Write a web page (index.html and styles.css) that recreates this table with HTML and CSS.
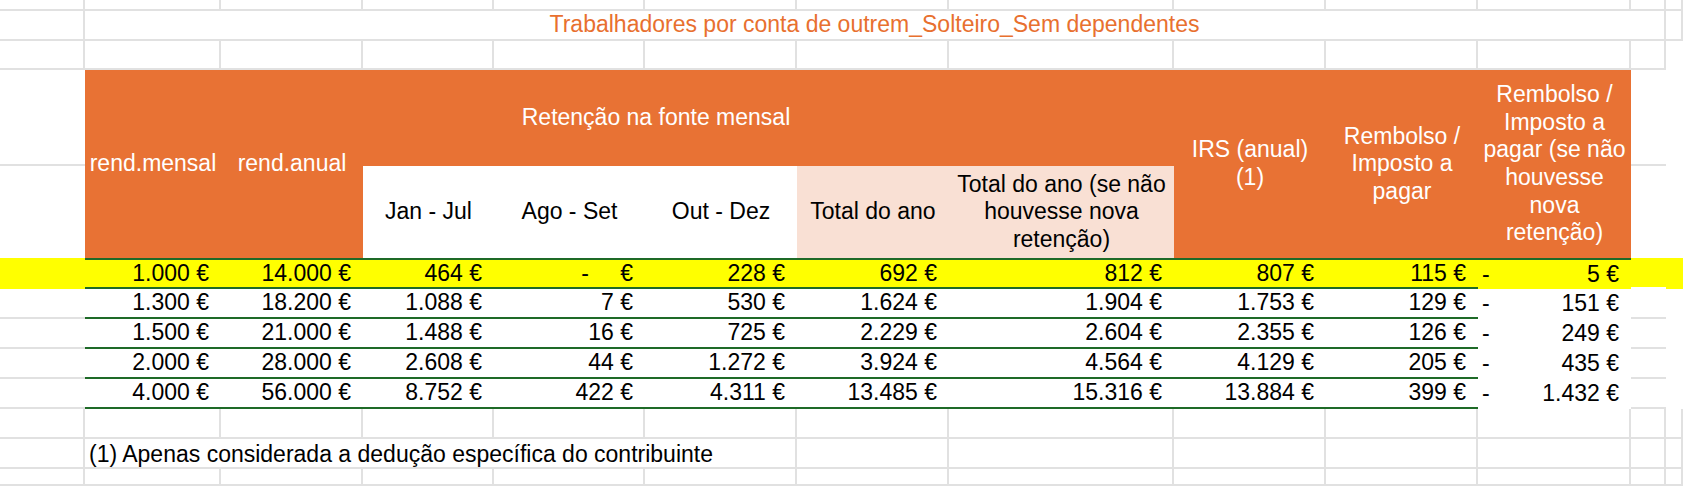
FILE: index.html
```html
<!DOCTYPE html>
<html lang="pt">
<head>
<meta charset="utf-8">
<title>Trabalhadores por conta de outrem</title>
<link rel="stylesheet" href="styles.css">
</head>
<body>
<div class="sheet">
  <!-- row 0 -->
  <div class="g"></div><div class="g"></div><div class="g"></div><div class="g"></div><div class="g"></div><div class="g"></div><div class="g"></div><div class="g"></div><div class="g"></div><div class="g"></div><div class="g"></div><div class="g"></div><div class="g"></div>
  <!-- row 1 -->
  <div class="g"></div>
  <div class="g title">Trabalhadores por conta de outrem_Solteiro_Sem dependentes</div>
  <div class="g"></div>
  <!-- row 2 -->
  <div class="g"></div><div class="g"></div><div class="g"></div><div class="g"></div><div class="g"></div><div class="g"></div><div class="g"></div><div class="g"></div><div class="g"></div><div class="g"></div><div class="g"></div><div class="g"></div><div></div>
  <!-- row 3 -->
  <div class="gb"></div>
  <div class="hd rs2">rend.mensal</div>
  <div class="hd rs2">rend.anual</div>
  <div class="hd cs4">Retenção na fonte mensal</div>
  <div class="hd"></div>
  <div class="hd rs2">IRS (anual) (1)</div>
  <div class="hd rs2">Rembolso / Imposto a pagar</div>
  <div class="hd rs2">Rembolso / Imposto a pagar (se não houvesse nova retenção)</div>
  <div class="gb"></div>
  <div></div>
  <!-- row 4 -->
  <div></div>
  <div class="sub">Jan - Jul</div>
  <div class="sub">Ago - Set</div>
  <div class="sub">Out - Dez</div>
  <div class="sub pk">Total do ano</div>
  <div class="sub pk">Total do ano (se não houvesse nova retenção)</div>
  <div></div>
  <div></div>
  <!-- row 5 (highlighted) -->
  <div class="y"></div>
  <div class="num y top">1.000&nbsp;€</div>
  <div class="num y top">14.000&nbsp;€</div>
  <div class="num y top">464&nbsp;€</div>
  <div class="num y top"><span class="dz">-</span>&nbsp;€</div>
  <div class="num y top">228&nbsp;€</div>
  <div class="num y top">692&nbsp;€</div>
  <div class="num y top">812&nbsp;€</div>
  <div class="num y top">807&nbsp;€</div>
  <div class="num y top">115&nbsp;€</div>
  <div class="neg y top"><span>-</span><span>5&nbsp;€</span></div>
  <div class="y wb"></div>
  <div class="y"></div>
  <!-- row 6 -->
  <div class="gb"></div>
  <div class="num">1.300&nbsp;€</div>
  <div class="num">18.200&nbsp;€</div>
  <div class="num">1.088&nbsp;€</div>
  <div class="num">7&nbsp;€</div>
  <div class="num">530&nbsp;€</div>
  <div class="num">1.624&nbsp;€</div>
  <div class="num">1.904&nbsp;€</div>
  <div class="num">1.753&nbsp;€</div>
  <div class="num">129&nbsp;€</div>
  <div class="neg"><span>-</span><span>151&nbsp;€</span></div>
  <div class="gb"></div>
  <div></div>
  <!-- row 7 -->
  <div class="gb"></div>
  <div class="num">1.500&nbsp;€</div>
  <div class="num">21.000&nbsp;€</div>
  <div class="num">1.488&nbsp;€</div>
  <div class="num">16&nbsp;€</div>
  <div class="num">725&nbsp;€</div>
  <div class="num">2.229&nbsp;€</div>
  <div class="num">2.604&nbsp;€</div>
  <div class="num">2.355&nbsp;€</div>
  <div class="num">126&nbsp;€</div>
  <div class="neg"><span>-</span><span>249&nbsp;€</span></div>
  <div class="gb"></div>
  <div></div>
  <!-- row 8 -->
  <div class="gb"></div>
  <div class="num">2.000&nbsp;€</div>
  <div class="num">28.000&nbsp;€</div>
  <div class="num">2.608&nbsp;€</div>
  <div class="num">44&nbsp;€</div>
  <div class="num">1.272&nbsp;€</div>
  <div class="num">3.924&nbsp;€</div>
  <div class="num">4.564&nbsp;€</div>
  <div class="num">4.129&nbsp;€</div>
  <div class="num">205&nbsp;€</div>
  <div class="neg"><span>-</span><span>435&nbsp;€</span></div>
  <div class="gb"></div>
  <div></div>
  <!-- row 9 -->
  <div class="gb"></div>
  <div class="num">4.000&nbsp;€</div>
  <div class="num">56.000&nbsp;€</div>
  <div class="num">8.752&nbsp;€</div>
  <div class="num">422&nbsp;€</div>
  <div class="num">4.311&nbsp;€</div>
  <div class="num">13.485&nbsp;€</div>
  <div class="num">15.316&nbsp;€</div>
  <div class="num">13.884&nbsp;€</div>
  <div class="num">399&nbsp;€</div>
  <div class="neg"><span>-</span><span>1.432&nbsp;€</span></div>
  <div class="gb"></div>
  <div></div>
  <!-- row 10 -->
  <div class="g"></div><div class="g"></div><div class="g"></div><div class="g"></div><div class="g"></div><div class="g"></div><div class="g"></div><div class="g"></div><div class="g"></div><div class="g"></div><div class="g"></div><div class="g"></div><div class="g"></div>
  <!-- row 11 -->
  <div class="g"></div>
  <div class="g note">(1) Apenas considerada a dedução específica do contribuinte</div>
  <div class="g"></div><div class="g"></div><div class="g"></div><div class="g"></div><div class="g"></div><div class="g"></div><div class="g"></div>
  <!-- row 12 -->
  <div class="g"></div><div class="g"></div><div class="g"></div><div class="g"></div><div class="g"></div><div class="g"></div><div class="g"></div><div class="g"></div><div class="g"></div><div class="g"></div><div class="g"></div><div class="g"></div><div class="g"></div>
</div>
</body>
</html>
```

FILE: styles.css
```css
* { box-sizing: border-box; }

html, body {
  margin: 0;
  padding: 0;
  background: #ffffff;
}

body {
  font-family: "Liberation Sans", Arial, sans-serif;
  font-size: 23px;
  line-height: 1.2;
  color: #000000;
  overflow: hidden;
}

.sheet {
  display: grid;
  grid-template-columns: 85px 136px 142px 131px 151px 152px 152px 225px 152px 152px 153px 35px 17px;
  grid-template-rows: 11px 30px 29px 96px 92px 31px 30px 30px 30px 30px 30px 30px 17px;
  width: 1683px;
  height: 486px;
}

.g {
  border-right: 2px solid #e1e1e1;
  border-bottom: 2px solid #e1e1e1;
}

.gb {
  border-bottom: 2px solid #e1e1e1;
}

.title {
  grid-column: span 11;
  color: #e8702f;
  display: flex;
  align-items: center;
  justify-content: center;
  white-space: nowrap;
}

.hd {
  background: #e87234;
  color: #ffffff;
  display: flex;
  align-items: center;
  justify-content: center;
  text-align: center;
  padding: 0 4px;
}

.rs2 { grid-row: span 2; }
.cs4 { grid-column: span 4; }

.sub {
  display: flex;
  align-items: center;
  justify-content: center;
  text-align: center;
  padding: 0 4px;
  background: #ffffff;
}

.pk { background: #f9e0d4; }

.num {
  display: flex;
  align-items: center;
  justify-content: flex-end;
  padding-right: 12px;
  border-bottom: 2px solid #1e6a27;
  white-space: nowrap;
}

.neg {
  display: flex;
  align-items: center;
  justify-content: space-between;
  padding: 0 12px 0 4px;
  white-space: nowrap;
}

.y { background: #ffff00; }

.top { border-top: 2px solid #1e6a27; }

.wb { border-bottom: 2px solid #ffffff; }

.dz { margin-right: 25px; }

.note {
  grid-column: span 5;
  display: flex;
  align-items: center;
  padding: 3px 0 0 4px;
  white-space: nowrap;
}
```
